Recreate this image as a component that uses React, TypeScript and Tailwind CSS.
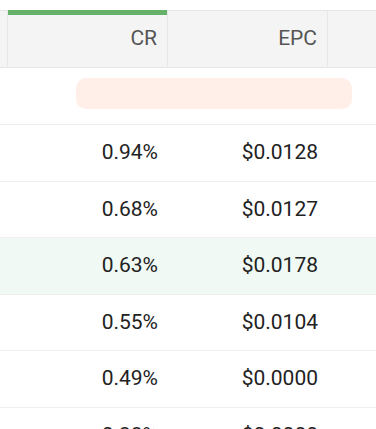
import React from "react"

const rows = [
  { cr: "0.94%", epc: "$0.0128" },
  { cr: "0.68%", epc: "$0.0127" },
  { cr: "0.63%", epc: "$0.0178", hl: true },
  { cr: "0.55%", epc: "$0.0104" },
  { cr: "0.49%", epc: "$0.0000" },
  { cr: "0.38%", epc: "$0.0000" },
]

export default function App() {
  return (
    <div className="w-[376px] h-[429px] overflow-hidden bg-white text-[21px] font-['Roboto',sans-serif] text-[#222]">
      <div className="h-[10px]" />
      <div className="flex h-[58px] bg-[#f4f4f4] border-t border-b border-[#e6e6e6] text-[#555]">
        <div className="w-[8px] border-r border-[#e6e6e6]" />
        <div className="w-[160px] relative border-r border-[#e6e6e6] flex items-center justify-end pr-[10px]">
          <div className="absolute -top-px left-0 right-0 h-[5px] bg-[#66b16a]" />
          CR
        </div>
        <div className="w-[160px] border-r border-[#e6e6e6] flex items-center justify-end pr-[10px]">EPC</div>
        <div className="flex-1" />
      </div>
      <div className="h-[57px] border-b border-[#ececec] pt-[10px] pl-[76px] pr-[24px]">
        <div className="w-full h-[31px] rounded-[10px] bg-[#ffefe8]" />
      </div>
      {rows.map((r, i) => (
        <div
          key={i}
          className={`flex h-[56.6px] border-b border-[#efefef] ${r.hl ? "bg-[#f0f9f4]" : ""}`}
        >
          <div className="w-[8px]" />
          <div className="w-[160px] flex items-center justify-end pr-[10px]">{r.cr}</div>
          <div className="w-[160px] flex items-center justify-end pr-[10px]">{r.epc}</div>
          <div className="flex-1" />
        </div>
      ))}
    </div>
  )
}
